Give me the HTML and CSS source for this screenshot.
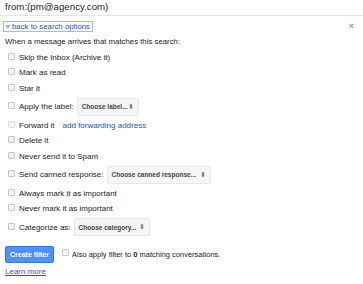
FILE: index.html
```html
<!DOCTYPE html>
<html>
<head>
<meta charset="utf-8">
<link rel="stylesheet" href="styles.css">
</head>
<body>
<div class="header">from:(pm@agency.com)</div>
<div class="content">
  <div class="topline">
    <a class="back" href="#">« back to search options</a>
    <span class="close">×</span>
  </div>
  <div class="intro">When a message arrives that matches this search:</div>
  <div class="opts">
    <label class="row"><input type="checkbox" class="cb"><span>Skip the Inbox (Archive it)</span></label>
    <label class="row"><input type="checkbox" class="cb"><span>Mark as read</span></label>
    <label class="row"><input type="checkbox" class="cb"><span>Star it</span></label>
    <div class="row sel-row"><input type="checkbox" class="cb"><span>Apply the label:</span><span class="sel sel-label">Choose label...<span class="arr">&#x2B0D;</span></span></div>
    <div class="row"><input type="checkbox" class="cb cb-dis"><span class="dis">Forward it</span><a class="link fwd" href="#">add forwarding address</a></div>
    <label class="row"><input type="checkbox" class="cb"><span>Delete it</span></label>
    <label class="row"><input type="checkbox" class="cb"><span>Never send it to Spam</span></label>
    <div class="row sel-row"><input type="checkbox" class="cb"><span>Send canned response:</span><span class="sel sel-canned">Choose canned response...<span class="arr">&#x2B0D;</span></span></div>
    <label class="row"><input type="checkbox" class="cb"><span>Always mark it as important</span></label>
    <label class="row"><input type="checkbox" class="cb"><span>Never mark it as important</span></label>
    <div class="row sel-row"><input type="checkbox" class="cb"><span>Categorize as:</span><span class="sel sel-cat">Choose category...<span class="arr">&#x2B0D;</span></span></div>
  </div>
  <div class="actions">
    <button class="btn">Create filter</button>
    <input type="checkbox" class="cb cb-also"><span class="also">Also apply filter to <b>0</b> matching conversations.</span>
  </div>
  <a class="learn" href="#">Learn more</a>
</div>
</body>
</html>
```
FILE: styles.css
```css
html, body {
  margin: 0;
  padding: 0;
  background: #fff;
  font-family: "Liberation Sans", Arial, sans-serif;
  color: #222;
}
.header {
  height: 14px;
  padding: 1px 5px 0;
  font-size: 9.7px;
  line-height: 12px;
  color: #222;
  border-bottom: 1px solid #e5e5e5;
}
.content {
  padding: 0 5px;
  font-size: 8px;
}
.topline {
  display: flex;
  justify-content: space-between;
  align-items: center;
  margin-top: 6px;
  height: 8px;
}
.back {
  color: #15c;
  text-decoration: none;
  outline: 1px solid #9dbcf0;
  outline-offset: 1px;
  line-height: 7px;
  font-size: 7.8px;
  padding: 0 0.5px;
}
.close {
  color: #999;
  font-size: 9px;
  margin-right: 4px;
  font-weight: bold;
}
.intro {
  margin-top: 7px;
  height: 10px;
  line-height: 10px;
  font-size: 7.8px;
}
.opts {
  display: flex;
  flex-direction: column;
  margin-top: 3px;
}
.row {
  display: flex;
  align-items: center;
  height: 15.3px;
  white-space: nowrap;
}
.sel-row {
  height: 22px;
}
.cb {
  -webkit-appearance: none;
  appearance: none;
  width: 7px;
  height: 7px;
  margin: 0 4px 0 3px;
  border: 1px solid #c6c6c6;
  border-radius: 1px;
  background: #f4f4f4;
  box-sizing: border-box;
  flex: none;
  position: relative;
  top: -1px;
}
.cb-dis {
  opacity: 0.6;
}
.link {
  color: #15c;
  text-decoration: none;
}
.fwd {
  margin-left: 8px;
}
.sel {
  display: inline-flex;
  align-items: center;
  justify-content: space-between;
  box-sizing: border-box;
  height: 18px;
  margin-left: 3px;
  padding: 0 4px 0 4px;
  background: #f5f5f5;
  border: 1px solid #e6e6e6;
  border-radius: 2px;
  font-size: 6.5px;
  font-weight: bold;
  color: #444;
  white-space: nowrap;
}
.sel-label { width: 62px; }
.sel-canned { width: 104px; }
.sel-cat { width: 76px; }
.arr {
  font-size: 7px;
  color: #777;
  font-weight: normal;
}
.actions {
  display: flex;
  align-items: center;
  margin-top: 8px;
  white-space: nowrap;
}
.btn {
  width: 49px;
  height: 17px;
  padding: 0;
  border: 1px solid #3079ed;
  border-radius: 2px;
  background: #4d90fe;
  color: #fff;
  font-family: "Liberation Sans", Arial, sans-serif;
  font-size: 7px;
  font-weight: bold;
}
.cb-also {
  margin: 0 3px 0 8px;
  top: -2px;
}
.also {
  font-size: 7.5px;
}
.learn {
  display: inline-block;
  margin-top: 4px;
  color: #5a3be0;
  font-size: 8px;
}
```
